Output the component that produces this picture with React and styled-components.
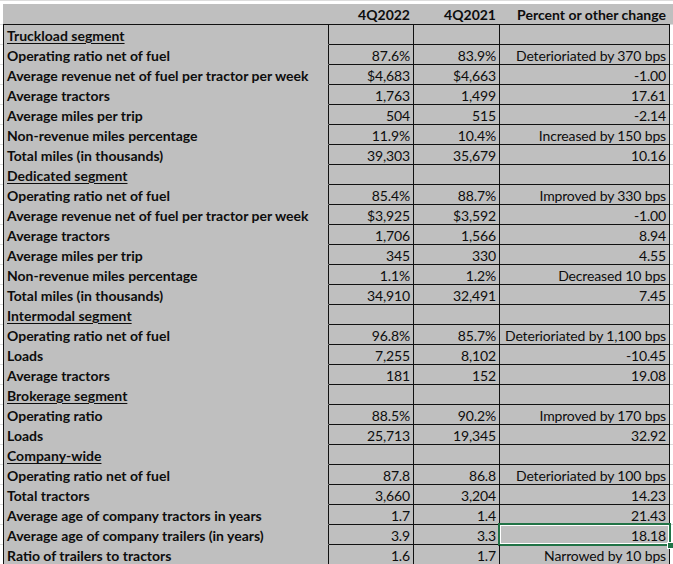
import styled, { createGlobalStyle } from "styled-components";

const GlobalStyle = createGlobalStyle`
	html, body {
		margin: 0;
		padding: 0;
		background: #ffffff;
	}
	#root {
		width: 673px;
		height: 564px;
		overflow: hidden;
	}
`;

const COLS = "325px 85px 86px 170px";

const Page = styled.div`
	width: 673px;
	height: 564px;
	overflow: hidden;
	box-sizing: border-box;
	padding: 4px 0 0 3px;
	background-color: #ffffff;
	background-image: repeating-linear-gradient(
		to bottom,
		transparent 0 19px,
		#dcdcdc 19px 20px
	);
	background-position: 0 5px;
	font-family: Lato, "Liberation Sans", sans-serif;
	font-size: 14px;
	color: #0d0d0d;
`;

const HeaderRow = styled.div`
	display: grid;
	grid-template-columns: 326px 85px 86px 170px;
	height: 20px;
	background: #bfbfbf;
	font-weight: 700;
`;

const HeaderCell = styled.div`
	box-sizing: border-box;
	height: 20px;
	line-height: 21px;
	padding-right: 4px;
	text-align: right;
	white-space: nowrap;
`;

const Grid = styled.div`
	display: grid;
	grid-template-columns: ${COLS};
	width: max-content;
	border-top: 1px solid #111;
	border-left: 1px solid #111;
	background: #bfbfbf;
`;

const Cell = styled.div`
	position: relative;
	box-sizing: border-box;
	height: 20px;
	line-height: 21px;
	padding: 0 3px;
	border-right: 1px solid #111;
	border-bottom: 1px solid ${(p) => (p.$label ? "transparent" : "#111")};
	text-align: ${(p) => (p.$label ? "left" : "right")};
	font-weight: ${(p) => (p.$label ? 700 : 400)};
	letter-spacing: ${(p) => (p.$label ? "0" : "-0.15px")};
	text-decoration: ${(p) => (p.$heading ? "underline" : "none")};
	text-underline-offset: 2px;
	white-space: nowrap;

	${(p) =>
		p.$selected &&
		`
		&::after {
			content: "";
			position: absolute;
			left: -2px;
			top: -2px;
			right: -2px;
			bottom: -2px;
			border: 2px solid #217346;
			box-shadow: inset 0 0 0 1px #ffffff;
			pointer-events: none;
		}
		&::before {
			content: "";
			position: absolute;
			right: -4px;
			bottom: -4px;
			width: 5px;
			height: 5px;
			background: #217346;
			outline: 1px solid #ffffff;
			z-index: 1;
		}
	`}
`;

const rows = [
	{ h: "Truckload segment" },
	["Operating ratio net of fuel", "87.6%", "83.9%", "Deterioriated by 370 bps"],
	["Average revenue net of fuel per tractor per week", "$4,683", "$4,663", "-1.00"],
	["Average tractors", "1,763", "1,499", "17.61"],
	["Average miles per trip", "504", "515", "-2.14"],
	["Non-revenue miles percentage", "11.9%", "10.4%", "Increased by 150 bps"],
	["Total miles (in thousands)", "39,303", "35,679", "10.16"],
	{ h: "Dedicated segment" },
	["Operating ratio net of fuel", "85.4%", "88.7%", "Improved by 330 bps"],
	["Average revenue net of fuel per tractor per week", "$3,925", "$3,592", "-1.00"],
	["Average tractors", "1,706", "1,566", "8.94"],
	["Average miles per trip", "345", "330", "4.55"],
	["Non-revenue miles percentage", "1.1%", "1.2%", "Decreased 10 bps"],
	["Total miles (in thousands)", "34,910", "32,491", "7.45"],
	{ h: "Intermodal segment" },
	["Operating ratio net of fuel", "96.8%", "85.7%", "Deterioriated by 1,100 bps"],
	["Loads", "7,255", "8,102", "-10.45"],
	["Average tractors", "181", "152", "19.08"],
	{ h: "Brokerage segment" },
	["Operating ratio", "88.5%", "90.2%", "Improved by 170 bps"],
	["Loads", "25,713", "19,345", "32.92"],
	{ h: "Company-wide" },
	["Operating ratio net of fuel", "87.8", "86.8", "Deterioriated by 100 bps"],
	["Total tractors", "3,660", "3,204", "14.23"],
	["Average age of company tractors in years", "1.7", "1.4", "21.43"],
	["Average age of company trailers (in years)", "3.9", "3.3", "18.18", true],
	["Ratio of trailers to tractors", "1.6", "1.7", "Narrowed by 10 bps"],
];

export default function App() {
	return (
		<Page>
			<GlobalStyle />
			<HeaderRow>
				<HeaderCell />
				<HeaderCell>4Q2022</HeaderCell>
				<HeaderCell>4Q2021</HeaderCell>
				<HeaderCell>Percent or other change</HeaderCell>
			</HeaderRow>
			<Grid>
				{rows.map((r, i) =>
					r.h ? (
						[
							<Cell key={i + "a"} $label $heading>
								{r.h}
							</Cell>,
							<Cell key={i + "b"} />,
							<Cell key={i + "c"} />,
							<Cell key={i + "d"} />,
						]
					) : (
						[
							<Cell key={i + "a"} $label>
								{r[0]}
							</Cell>,
							<Cell key={i + "b"}>{r[1]}</Cell>,
							<Cell key={i + "c"}>{r[2]}</Cell>,
							<Cell key={i + "d"} $selected={r[4]}>
								{r[3]}
							</Cell>,
						]
					)
				)}
			</Grid>
		</Page>
	);
}
